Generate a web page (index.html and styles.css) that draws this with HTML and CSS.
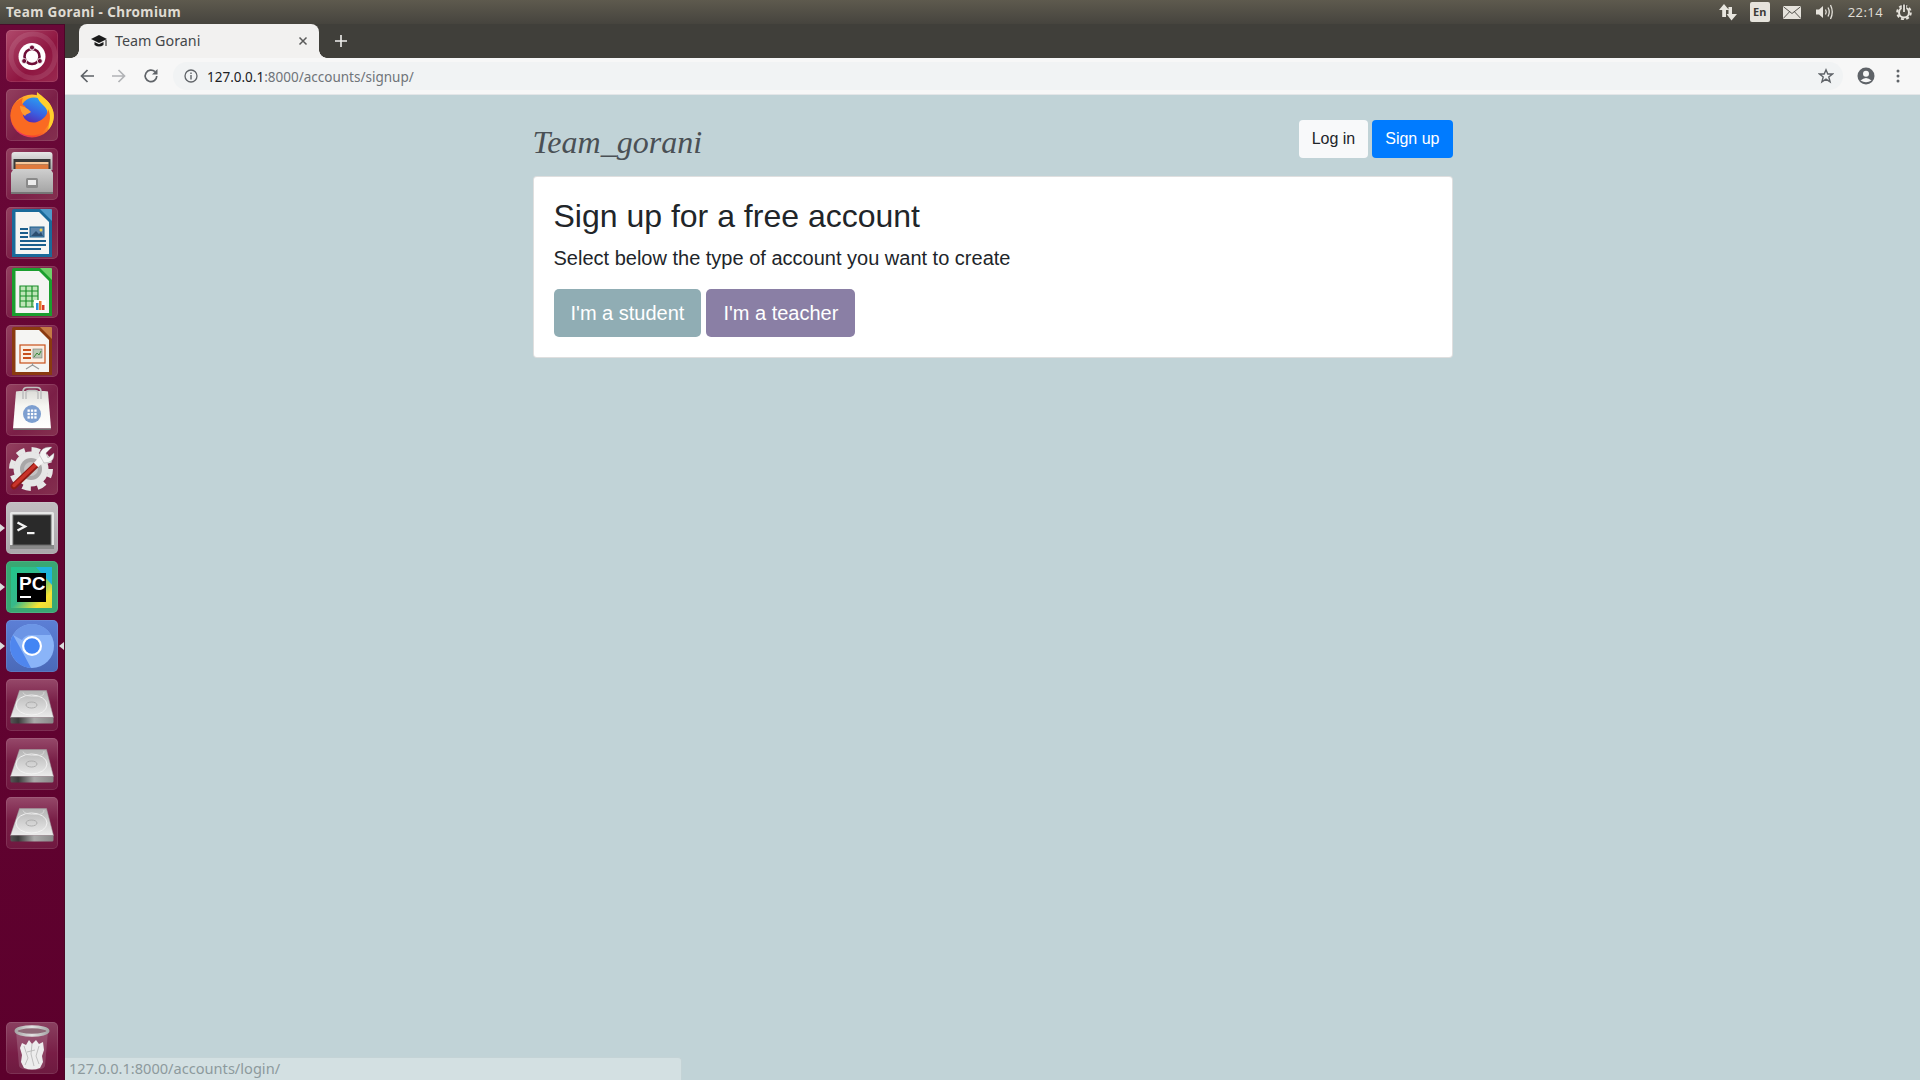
FILE: index.html
```html
<!DOCTYPE html>
<html lang="en">
<head>
<meta charset="utf-8">
<title>Team Gorani</title>
<link rel="stylesheet" href="styles.css">
</head>
<body>
<svg class="defs" aria-hidden="true">
  <defs>
    <linearGradient id="silver" x1="0" y1="0" x2="0" y2="1"><stop offset="0" stop-color="#e6e6e6"/><stop offset="1" stop-color="#a6a6a6"/></linearGradient>
    <linearGradient id="front" x1="0" y1="0" x2="0" y2="1"><stop offset="0" stop-color="#cfcfcf"/><stop offset="1" stop-color="#a2a2a2"/></linearGradient>
    <linearGradient id="hddtop" x1="0" y1="0" x2="0" y2="1"><stop offset="0" stop-color="#b4b4b4"/><stop offset="1" stop-color="#ececec"/></linearGradient>
    <linearGradient id="hddfront" x1="0" y1="0" x2="1" y2="0"><stop offset="0" stop-color="#555"/><stop offset=".18" stop-color="#3a3a3a"/><stop offset=".55" stop-color="#aaa"/><stop offset="1" stop-color="#888"/></linearGradient>
    <linearGradient id="rim" x1="0" y1="0" x2="1" y2="0"><stop offset="0" stop-color="#a8a8a8"/><stop offset=".5" stop-color="#e2e2e2"/><stop offset="1" stop-color="#a8a8a8"/></linearGradient>
    <linearGradient id="ffbody" x1=".85" y1=".05" x2=".15" y2=".95"><stop offset="0" stop-color="#ffd83a"/><stop offset=".45" stop-color="#ff9522"/><stop offset=".8" stop-color="#f5442c"/><stop offset="1" stop-color="#e8307a"/></linearGradient>
    <linearGradient id="ffglobe" x1=".7" y1="0" x2=".3" y2="1"><stop offset="0" stop-color="#2aa0f2"/><stop offset=".55" stop-color="#3a5fe0"/><stop offset="1" stop-color="#5b1fa8"/></linearGradient>
    <linearGradient id="pcframe" x1="0" y1="0" x2="1" y2="1"><stop offset="0" stop-color="#21c68c"/><stop offset=".5" stop-color="#37b88a"/><stop offset=".8" stop-color="#f7e433"/><stop offset="1" stop-color="#e5d83a"/></linearGradient>
    <linearGradient id="bag" x1="0" y1="0" x2="0" y2="1"><stop offset="0" stop-color="#dcdcd8"/><stop offset=".4" stop-color="#f6f6f2"/><stop offset="1" stop-color="#fff"/></linearGradient>
    <symbol id="hdd" viewBox="0 0 52 52">
      <path d="M13.500 11.500H40.500L47.500 38.500H4.500Z" fill="url(#hddtop)" stroke="#a0a0a0" stroke-width=".5"/>
      <path d="M4.500 38.500H47.500V43Q47.500 44.500 46 44.500H6Q4.500 44.500 4.500 43Z" fill="url(#hddfront)"/>
      <ellipse cx="25.500" cy="26" rx="15.500" ry="10" fill="none" stroke="#f4f4f4" stroke-width=".9"/>
      <ellipse cx="25.500" cy="26" rx="5.500" ry="3" fill="none" stroke="#a8a8a8" stroke-width=".9"/>
      <path d="M17 13.500Q18 18 33 17.500 38 17 38 13" fill="none" stroke="#dedede" stroke-width=".8"/>
    </symbol>
  </defs>
</svg>

<header class="panel">
  <span class="panel-title">Team Gorani - Chromium</span>
  <div class="tray">
    <svg class="tray-arrows" viewBox="0 0 18 18"><path d="M5 1L10 7H7V14H3.200V7H0ZM13 4V11H18L12.500 17.500 7.500 11H9.500V4Z" fill="#e8e6df"/></svg>
    <span class="tray-lang">En</span>
    <svg class="tray-mail" viewBox="0 0 18 13"><rect width="18" height="13" rx="1" fill="#e6e3dc"/><path d="M.5 .8L9 7.500 17.500 .8M.5 12.200L6.500 5.800M17.500 12.200L11.500 5.800" fill="none" stroke="#45433d" stroke-width=".9"/></svg>
    <svg class="tray-sound" viewBox="0 0 20 18"><path d="M1 6.500H4L8 3V15L4 11.500H1Z" fill="#e6e3dc"/><path d="M10.500 6.500Q12 9 10.500 11.500M13 4.500Q15.500 9 13 13.500M15.500 2Q19 9 15.500 16" fill="none" stroke="#e6e3dc" stroke-width="1.300"/></svg>
    <span class="tray-time">22:14</span>
    <svg class="tray-gear" viewBox="0 0 16 16"><circle cx="8" cy="8.500" r="5" fill="none" stroke="#e6e3dc" stroke-width="2"/><circle cx="8" cy="8.500" r="6.800" fill="none" stroke="#e6e3dc" stroke-width="2" stroke-dasharray="3 2.340"/><path d="M5.800 0H10.200V5H5.800Z" fill="#45433d"/><path d="M8 .5V8" stroke="#e6e3dc" stroke-width="1.800"/></svg>
  </div>
</header>

<div class="desk">
  <nav class="launcher">
    <div class="tile tile-ubuntu">
      <svg viewBox="0 0 52 52"><circle cx="27" cy="26" r="22" fill="none" stroke="#fff" stroke-width="5" opacity=".1"/><circle cx="26" cy="26.500" r="13.500" fill="#fff"/><circle cx="26" cy="26.500" r="7.500" fill="none" stroke="#6e0f38" stroke-width="2.600"/><g fill="#6e0f38" stroke="#fff" stroke-width=".8"><circle cx="26" cy="17.500" r="2.500"/><circle cx="18.200" cy="31" r="2.500"/><circle cx="33.800" cy="31" r="2.500"/></g></svg>
    </div>
    <div class="tile">
      <svg viewBox="0 0 52 52"><circle cx="26" cy="27" r="21.500" fill="url(#ffbody)"/><circle cx="28" cy="22" r="13.500" fill="url(#ffglobe)"/><path d="M31 3C37 8 45 13 47.500 23 49 31 46 37 42 41 45 31 43 22 38 17 34 13 30 9 31 3Z" fill="#ffcf2c"/><path d="M6 19C8 14 12 11 17 9 15 13 16 16 19 17 21 21 19 24 17 26 18 31 24 35 31 33 37 31 42 26 42 20 46 28 44 38 35 44 24 50 11 45 6 34 4 29 4 24 6 19Z" fill="#fa6a22"/><path d="M14 17C17 17 22 19 25 23 22 25 20 25 19 27 16 25 14 21 14 17Z" fill="#ff9a30"/></svg>
    </div>
    <div class="tile">
      <svg viewBox="0 0 52 52"><path d="M5.500 7Q5.500 4 8.500 4H43.500Q46.500 4 46.500 7V22H5.500Z" fill="url(#silver)"/><rect x="7.500" y="11" width="37" height="10" fill="#3a3a3a"/><rect x="9.500" y="14" width="33" height="2.500" fill="#f6c79a"/><rect x="9.500" y="16.500" width="33" height="4.500" fill="#df7a3d"/><path d="M7.500 21H44.500L47 25V46H5V25Z" fill="url(#front)"/><rect x="5" y="44" width="42" height="2" fill="#777"/><rect x="20" y="30" width="12" height="10" rx="1.500" fill="#8a8a8a"/><rect x="22" y="32" width="8" height="5" fill="#ececec"/></svg>
    </div>
    <div class="tile">
      <svg viewBox="0 0 52 52"><path d="M8 2H37L46 11V50H6V4Q6 2 8 2Z" fill="#1a6a9a"/><path d="M34 2H45Q46 2 46 3V14Z" fill="#4f9ac9"/><path d="M9.500 5H33L43 15V47H9.500Z" fill="#f5f5f3"/><g fill="#1a5e8c"><rect x="14" y="21" width="8" height="2"/><rect x="14" y="25" width="8" height="2"/><rect x="14" y="29" width="8" height="2"/><rect x="14" y="33" width="26" height="2"/><rect x="14" y="37" width="26" height="2"/><rect x="14" y="41" width="21" height="2"/></g><rect x="24" y="20" width="14" height="10" fill="#5f86ab" stroke="#1a5e8c"/><path d="M25 29L30 24 33 27 35 25 37 29Z" fill="#2b4e70"/><circle cx="35" cy="23" r="1.500" fill="#f0cf4e"/></svg>
    </div>
    <div class="tile">
      <svg viewBox="0 0 52 52"><path d="M8 2H37L46 11V50H6V4Q6 2 8 2Z" fill="#1b9e2e"/><path d="M34 2H45Q46 2 46 3V14Z" fill="#6fcf6a"/><path d="M9.500 5H33L43 15V47H9.500Z" fill="#f5f5f3"/><path d="M14 20H32V41H14ZM14 25H32M14 30H32M14 35H32M20 20V41M26 20V41" fill="#bfe6b8" stroke="#1b8e2a" stroke-width="1.200"/><rect x="28" y="34" width="12" height="10" fill="#fff"/><rect x="30" y="37" width="2.500" height="7" fill="#2f8fd6"/><rect x="33" y="35" width="2.500" height="9" fill="#e8792c"/><rect x="36" y="39" width="2.500" height="5" fill="#d63c2c"/></svg>
    </div>
    <div class="tile">
      <svg viewBox="0 0 52 52"><path d="M8 2H37L46 11V50H6V4Q6 2 8 2Z" fill="#8a3a10"/><path d="M34 2H45Q46 2 46 3V14Z" fill="#c47a45"/><path d="M9.500 5H33L43 15V47H9.500Z" fill="#f5f5f3"/><rect x="14" y="20" width="25" height="18" fill="#fbeee2" stroke="#c8501c" stroke-width="1.200"/><g fill="#c8501c"><rect x="17" y="24" width="8" height="2"/><rect x="17" y="28" width="8" height="2"/><rect x="17" y="32" width="8" height="2"/></g><rect x="27" y="24" width="9" height="9" fill="#b9c7b2" stroke="#777" stroke-width=".6"/><path d="M28 32L31 28 33 30 35 26" fill="none" stroke="#3b8a3b"/><path d="M26.500 38V41M26.500 40L20 44M26.500 40L33 44" fill="none" stroke="#999" stroke-width="1.200"/></svg>
    </div>
    <div class="tile">
      <svg viewBox="0 0 52 52"><path d="M10 7.500Q11 7 14 7H38Q41 7 42 7.500L45 44.500H7Z" fill="url(#bag)"/><path d="M7 44.500H45L44.500 46H7.500Z" fill="#6f6f6f"/><path d="M17 15V8Q17 3.500 21 3.500H31Q35 3.500 35 8V15M20 15V9Q20 6.500 23 6.500H29Q32 6.500 32 9V15" fill="none" stroke="#c2c2c2" stroke-width="1.700"/><circle cx="26" cy="30" r="9" fill="#7d9fd0"/><g fill="#fff"><rect x="21.500" y="25.500" width="2.300" height="2.300"/><rect x="24.900" y="25.500" width="2.300" height="2.300"/><rect x="28.300" y="25.500" width="2.300" height="2.300"/><rect x="21.500" y="28.900" width="2.300" height="2.300"/><rect x="24.900" y="28.900" width="2.300" height="2.300"/><rect x="28.300" y="28.900" width="2.300" height="2.300"/><rect x="21.500" y="32.300" width="2.300" height="2.300"/><rect x="24.900" y="32.300" width="2.300" height="2.300"/><rect x="28.300" y="32.300" width="2.300" height="2.300"/></g></svg>
    </div>
    <div class="tile">
      <svg viewBox="0 0 52 52"><circle cx="25" cy="26" r="19.500" fill="none" stroke="#e6e6e6" stroke-width="5" stroke-dasharray="8.500 6.810"/><circle cx="25" cy="26" r="17.500" fill="#e6e6e6"/><circle cx="25" cy="26" r="11" fill="#a9a7a8"/><circle cx="25" cy="26" r="7" fill="#c4c2c3"/><path d="M8 43L31 21" stroke="#8e1a14" stroke-width="6.500" stroke-linecap="round"/><path d="M8 42.500L30 21.500" stroke="#c9332a" stroke-width="3.500" stroke-linecap="round"/><path d="M30 22L38 14" stroke="#f4f4f4" stroke-width="6.500"/><path d="M33.500 12Q35 3 46 4L40 10 42 15 48 10Q49 20 38 20Z" fill="#f4f4f4" stroke="#8a8a8a" stroke-width=".4"/></svg>
    </div>
    <div class="tile tile-terminal is-running">
      <svg viewBox="0 0 52 52"><rect x="4" y="10" width="44" height="37" rx="1.500" fill="#e6e6e6"/><rect x="4" y="43" width="44" height="4" fill="#8a8a8a"/><rect x="7" y="13" width="38" height="30" fill="#2a2a2a" stroke="#666"/><path d="M11.500 20.500L19 24.500 11.500 28.500" fill="none" stroke="#f4f4f4" stroke-width="2.400"/><rect x="21" y="30" width="7.500" height="2.200" fill="#f4f4f4"/></svg>
    </div>
    <div class="tile tile-pycharm is-running">
      <svg viewBox="0 0 52 52"><rect x="5" y="6" width="41" height="41" fill="url(#pcframe)"/><path d="M30 6H46V24Z" fill="#1eb6dc"/><rect x="11" y="12" width="29" height="29" fill="#000"/><text class="pc-text" x="13" y="29">PC</text><rect x="14" y="35" width="11" height="2" fill="#fff"/></svg>
    </div>
    <div class="tile tile-chromium is-running is-active">
      <svg viewBox="0 0 52 52"><circle cx="26" cy="26" r="22" fill="#8ab4f8"/><path d="M7 15A22 22 0 0 1 45 15H26A11 11 0 0 0 16 20Z" fill="#6c95e6"/><path d="M7 15L17 33 25 48A22 22 0 0 1 7 15Z" fill="#4f86ee"/><circle cx="26" cy="26" r="10" fill="#fff"/><circle cx="26" cy="26" r="7.800" fill="#4285f4"/></svg>
    </div>
    <div class="tile tile-disk"><svg viewBox="0 0 52 52"><use href="#hdd"/></svg></div>
    <div class="tile tile-disk"><svg viewBox="0 0 52 52"><use href="#hdd"/></svg></div>
    <div class="tile tile-disk"><svg viewBox="0 0 52 52"><use href="#hdd"/></svg></div>
    <div class="tile tile-trash">
      <svg viewBox="0 0 52 52"><path d="M10 9L13 44Q14 48 26 48 38 48 39 44L42 9Z" fill="#fff" opacity=".16"/><path d="M14 26L16 21 20 23 23 18 26 22 30 18 33 22 37 20 38 28 36 34 37 40 34 46Q26 49 18 46L15 40 16 33Z" fill="#ededed"/><path d="M18 24L22 36 19 43M26 22L25 32 28 44M33 24L30 34 33 42M21 30L29 28" stroke="#b4b4b4" stroke-width=".8" fill="none"/><ellipse cx="26" cy="9" rx="16" ry="4.200" fill="#8f6a78" stroke="url(#rim)" stroke-width="3"/></svg>
    </div>
  </nav>

  <div class="browser">
    <div class="tabstrip">
      <div class="tab">
        <svg class="tab-icon" viewBox="0 0 16 14"><path d="M8 1L16 5 8 9 0 5Z" fill="#1a1a1a"/><path d="M3.500 8V11Q8 14 12.500 11V8L8 10.300Z" fill="#1a1a1a"/><rect x="14.500" y="6" width="1" height="6" fill="#1a1a1a"/></svg>
        <span class="tab-title">Team Gorani</span>
        <svg class="tab-close" viewBox="0 0 10 10"><path d="M1.500 1.500L8.500 8.500M8.500 1.500L1.500 8.500" stroke="#5a5a5a" stroke-width="1.500"/></svg>
      </div>
      <svg class="tab-new" viewBox="0 0 12 12"><path d="M6 0V12M0 6H12" stroke="#f0f0ee" stroke-width="1.600"/></svg>
    </div>
    <div class="toolbar">
      <svg class="tool" viewBox="0 0 16 16"><path d="M15 8H3M8.500 2L2.500 8 8.500 14" fill="none" stroke="#5f6368" stroke-width="1.700"/></svg>
      <svg class="tool" viewBox="0 0 16 16"><path d="M1 8H13M7.500 2L13.500 8 7.500 14" fill="none" stroke="#b1b3b6" stroke-width="1.700"/></svg>
      <svg class="tool" viewBox="0 0 16 16"><path d="M13.800 8A5.800 5.800 0 1 1 12 3.700" fill="none" stroke="#5f6368" stroke-width="1.700"/><path d="M14.500 1V6.500H9Z" fill="#5f6368"/></svg>
      <div class="omnibox">
        <svg class="info" viewBox="0 0 14 14"><circle cx="7" cy="7" r="6" fill="none" stroke="#5f6368" stroke-width="1.300"/><rect x="6.300" y="6" width="1.400" height="4.500" fill="#5f6368"/><rect x="6.300" y="3.500" width="1.400" height="1.500" fill="#5f6368"/></svg>
        <span class="url"><span class="url-host">127.0.0.1</span>:8000/accounts/signup/</span>
        <svg class="star" viewBox="0 0 16 16"><path d="M8 1.800L9.800 6H14.500L10.800 9 12.100 13.800 8 11.100 3.900 13.800 5.200 9 1.500 6H6.200Z" fill="none" stroke="#5f6368" stroke-width="1.400"/></svg>
      </div>
      <svg class="avatar" viewBox="0 0 18 18"><circle cx="9" cy="9" r="8.500" fill="#5f6368"/><circle cx="9" cy="6.800" r="3" fill="#f7f7f7"/><path d="M3.500 13.500Q9 8.500 14.500 13.500 9 17 3.500 13.500Z" fill="#f7f7f7"/></svg>
      <svg class="menu" viewBox="0 0 4 14"><circle cx="2" cy="2" r="1.500" fill="#5f6368"/><circle cx="2" cy="7" r="1.500" fill="#5f6368"/><circle cx="2" cy="12" r="1.500" fill="#5f6368"/></svg>
    </div>

    <main class="page">
      <div class="container">
        <div class="site-nav">
          <a class="brand">Team_gorani</a>
          <div class="nav-actions">
            <a class="btn btn-light">Log in</a>
            <a class="btn btn-primary">Sign up</a>
          </div>
        </div>
        <section class="card">
          <h2 class="card-title">Sign up for a free account</h2>
          <p class="lead">Select below the type of account you want to create</p>
          <div class="choices">
            <a class="btn btn-lg btn-student">I'm a student</a>
            <a class="btn btn-lg btn-teacher">I'm a teacher</a>
          </div>
        </section>
      </div>
      <div class="status-bubble">127.0.0.1:8000/accounts/login/</div>
    </main>
  </div>
</div>
</body>
</html>
```

FILE: styles.css
```css
* { box-sizing: border-box; }
html, body { height: 100%; }
body {
  margin: 0;
  width: 1920px;
  height: 1080px;
  overflow: hidden;
  display: flex;
  flex-direction: column;
  font-family: "Liberation Sans", Arial, sans-serif;
  color: #212529;
  background: #c1d3d7;
}
svg { display: block; flex: none; }
.defs { position: absolute; width: 0; height: 0; }

/* Ubuntu top panel */
.panel {
  flex: none;
  height: 24px;
  display: flex;
  align-items: center;
  justify-content: space-between;
  padding: 0 8px 0 6px;
  background: linear-gradient(#5e5a4e, #46443e);
}
.panel-title {
  font: 700 13.500px "Noto Sans", sans-serif;
  color: #dfdbd2;
  letter-spacing: .38px;
}
.tray { display: flex; align-items: center; }
.tray-arrows { width: 18px; height: 18px; margin-right: 13px; }
.tray-lang {
  width: 20px;
  height: 20px;
  border-radius: 2px;
  background: #e6e3dc;
  color: #3c3b37;
  font: 700 11px/20px "Noto Sans", sans-serif;
  text-align: center;
  margin-right: 13px;
}
.tray-mail { width: 18px; height: 13px; margin-right: 14px; }
.tray-sound { width: 20px; height: 18px; margin-right: 13px; }
.tray-time {
  font: 400 13px "Noto Sans", sans-serif;
  color: #dfdbd2;
  letter-spacing: .4px;
  margin-right: 13px;
}
.tray-gear { width: 16px; height: 16px; }

.desk { flex: 1; min-height: 0; display: flex; }

/* Launcher */
.launcher {
  flex: none;
  width: 65px;
  display: flex;
  flex-direction: column;
  gap: 7px;
  padding: 6px 7px 6px 6px;
  background: linear-gradient(#6a0838, #5c002c);
  border-right: 1px solid #4c0626;
  box-shadow: inset 0 1px 0 #4a0a2a;
}
.tile {
  position: relative;
  width: 52px;
  height: 52px;
  flex: none;
  border-radius: 5px;
  background: linear-gradient(135deg, #93405f, #7b1f47 55%, #84304f);
  box-shadow: inset 0 0 0 1px rgba(255, 255, 255, .1);
}
.tile svg { width: 52px; height: 52px; }
.tile-ubuntu { background: linear-gradient(135deg, #b04a6c, #8e1540 60%, #9a2a50); }
.tile-terminal { background: linear-gradient(#c2bec1, #aaa6aa); }
.tile-pycharm { background: #39a873; }
.tile-chromium { background: linear-gradient(#5c7fd6, #4a69b8); }
.tile-disk { background: linear-gradient(#96496a, #781e46 45%, #701840); }
.tile-trash { margin-top: auto; background: linear-gradient(#8a4060, #781e46 60%, #6e1a40); }
.is-running::before {
  content: "";
  position: absolute;
  left: -6px;
  top: 22px;
  border-style: solid;
  border-width: 4px 0 4px 5px;
  border-color: transparent transparent transparent #dcdcdc;
}
.is-active::after {
  content: "";
  position: absolute;
  right: -6px;
  top: 22px;
  border-style: solid;
  border-width: 4px 5px 4px 0;
  border-color: transparent #dcdcdc transparent transparent;
}
.pc-text { font: 700 19px "Liberation Sans", sans-serif; fill: #fff; }

/* Browser chrome */
.browser { flex: 1; min-width: 0; display: flex; flex-direction: column; }
.tabstrip {
  flex: none;
  height: 34px;
  display: flex;
  align-items: center;
  padding-left: 14px;
  background: #403f3a;
}
.tab {
  position: relative;
  align-self: stretch;
  width: 240px;
  display: flex;
  align-items: center;
  padding: 0 11px 0 12px;
  background: #f2f1f0;
  border-radius: 8px 8px 0 0;
}
.tab::before, .tab::after {
  content: "";
  position: absolute;
  bottom: 0;
  width: 8px;
  height: 8px;
}
.tab::before { left: -8px; background: radial-gradient(circle at 0 0, transparent 7.500px, #f2f1f0 8px); }
.tab::after { right: -8px; background: radial-gradient(circle at 100% 0, transparent 7.500px, #f2f1f0 8px); }
.tab-icon { width: 16px; height: 14px; margin-right: 8px; }
.tab-title { flex: 1; padding-bottom: 2px; font: 400 14.300px "Noto Sans", sans-serif; color: #45474a; }
.tab-close { width: 10px; height: 10px; }
.tab-new { width: 12px; height: 12px; margin-left: 16px; }
.toolbar {
  flex: none;
  height: 37px;
  display: flex;
  align-items: center;
  padding: 0 20px 0 14px;
  background: #f7f7f7;
  border-bottom: 1px solid #e4e6e8;
}
.tool { width: 16px; height: 16px; margin-right: 16px; }
.omnibox {
  flex: 1;
  height: 28px;
  display: flex;
  align-items: center;
  margin: 0 14px 0 -2px;
  padding: 0 9px 0 11px;
  background: #f1f3f4;
  border-radius: 14px;
}
.info { width: 14px; height: 14px; margin-right: 9px; }
.url { flex: 1; padding-top: 1px; font: 400 13.500px "Noto Sans", sans-serif; color: #6f7479; }
.url-host { color: #202124; }
.star { width: 16px; height: 16px; }
.avatar { width: 18px; height: 18px; margin-right: 21px; }
.menu { width: 4px; height: 14px; }

/* Page */
.page { position: relative; flex: 1; min-height: 0; background: #c1d3d7; }
.container { width: 920px; margin: 0 auto; }
.site-nav {
  display: flex;
  justify-content: space-between;
  align-items: flex-start;
  height: 81px;
  padding-top: 25px;
}
.brand {
  font: italic 400 32px/1 "Liberation Serif", serif;
  color: #4a5055;
  margin-top: 6px;
}
.nav-actions { display: flex; gap: 4px; }
.btn {
  display: block;
  padding: 6px 12px;
  font-size: 16px;
  line-height: 24px;
  border: 1px solid transparent;
  border-radius: 4px;
  white-space: nowrap;
}
.btn-lg { padding: 8px 16px; font-size: 20px; line-height: 30px; border-radius: 5px; }
.btn-light { background: #f8f9fa; color: #212529; }
.btn-primary { background: #007bff; color: #fff; }
.btn-student { background: #90adb4; color: #fff; }
.btn-teacher { background: #8a7fa5; color: #fff; }
.card {
  background: #fff;
  border: 1px solid rgba(0, 0, 0, .125);
  border-radius: 4px;
  padding: 20px;
}
.card-title { margin: 0 0 8px; font-size: 32px; font-weight: 500; line-height: 38.400px; }
.lead { margin: 0 0 16px; font-size: 20px; line-height: 30px; }
.choices { display: flex; gap: 5px; }
.status-bubble {
  position: absolute;
  left: 0;
  bottom: 0;
  width: 617px;
  height: 23px;
  padding: 0 4px;
  font: 400 14.600px "Noto Sans", sans-serif;
  color: #8d9a9d;
  background: #d3e0e2;
  border: 1px solid #c4d3d6;
  border-width: 1px 1px 0 0;
  border-radius: 0 4px 0 0;
}
```
